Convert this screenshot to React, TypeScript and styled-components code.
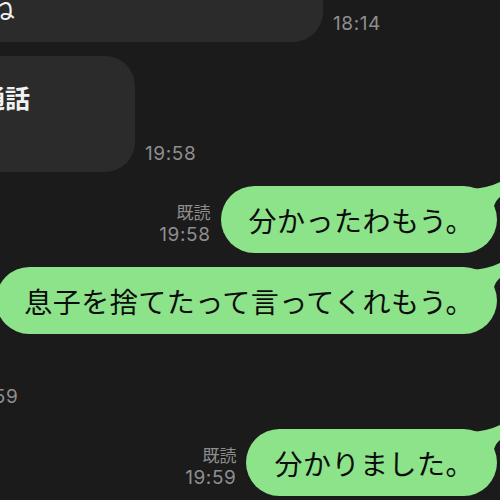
import styled, { createGlobalStyle } from "styled-components";

const GlobalStyle = createGlobalStyle`
  html, body {
    margin: 0;
    padding: 0;
    background: #1b1b1b;
  }
  body {
    width: 500px;
    height: 500px;
    overflow: hidden;
    font-family: "Noto Sans CJK JP", "Noto Sans", sans-serif;
  }
`;

const Screen = styled.div`
  width: 500px;
  height: 500px;
  overflow: hidden;
  background: #1b1b1b;
`;

// the visible area is a crop: the chat list starts left of and above the window
const ChatList = styled.div`
  width: 660px;
  margin: -58px 0 0 -160px;
  display: flex;
  flex-direction: column;
  gap: 14px;
`;

const ReceivedRow = styled.div`
  display: flex;
  align-items: flex-end;
  gap: 10px;
  padding-left: 10px;
`;

const SentRow = styled.div`
  display: flex;
  align-items: flex-end;
  justify-content: flex-end;
  gap: 10px;
  padding-right: 3px;
`;

const ReceivedBubble = styled.div<{ $width: number; $height?: number }>`
  box-sizing: border-box;
  width: ${(p) => p.$width}px;
  ${(p) => (p.$height ? `height: ${p.$height}px;` : "")}
  padding: 17px 26px;
  background: #2b2b2b;
  border-radius: 30px;
  color: #f2f2f2;
  font-size: 27px;
  line-height: 33px;
  letter-spacing: 1px;
`;

const CallBody = styled.div`
  display: flex;
  align-items: center;
  gap: 14px;
  padding-top: 8px;
`;

const CallIcon = styled.div`
  width: 40px;
  height: 40px;
  border-radius: 50%;
  background: #3a3a3a;
  flex: none;
`;

const CallTexts = styled.div`
  display: flex;
  flex-direction: column;
`;

const CallTitle = styled.span`
  font-size: 25px;
  font-weight: 700;
  line-height: 32px;
  letter-spacing: 0;
`;

const CallSub = styled.span`
  font-size: 16px;
  line-height: 24px;
  color: #9a9a9a;
`;

const SentBubble = styled.div`
  position: relative;
  box-sizing: border-box;
  height: 67px;
  display: flex;
  align-items: center;
  padding: 0 23px 0 28px;
  background: #8de38a;
  border-radius: 34px;
  color: #0c0c0c;
  font-size: 28px;
  letter-spacing: 0.5px;
  white-space: nowrap;
`;

const Ear = styled.svg`
  position: absolute;
  right: -3px;
  top: -4px;
  width: 30px;
  height: 26px;
`;

const Meta = styled.div`
  display: flex;
  flex-direction: column;
  align-items: flex-end;
  padding-bottom: 7px;
  color: #8e8e8e;
`;

const ReadMark = styled.span`
  font-size: 17px;
  line-height: 23px;
`;

const Time = styled.span`
  font-family: Inter, "Liberation Sans", sans-serif;
  font-size: 19px;
  line-height: 23px;
  letter-spacing: 0.6px;
`;

function BubbleEar() {
  return (
    <Ear viewBox="0 0 30 26">
      <path d="M0 7 Q18 6 30 0 L30 15 Q26 18 24 24 L0 24 Z" fill="#8de38a" />
    </Ear>
  );
}

function Sent({ text, time }: { text: string; time: string }) {
  return (
    <SentRow>
      <Meta>
        <ReadMark>既読</ReadMark>
        <Time>{time}</Time>
      </Meta>
      <SentBubble>
        {text}
        <BubbleEar />
      </SentBubble>
    </SentRow>
  );
}

export default function App() {
  return (
    <Screen>
      <GlobalStyle />
      <ChatList>
        <ReceivedRow>
          <ReceivedBubble $width={473}>
            もう少し話せるかな
            <br />
            いいのかね
          </ReceivedBubble>
          <Meta>
            <Time>18:14</Time>
          </Meta>
        </ReceivedRow>

        <ReceivedRow>
          <ReceivedBubble $width={285} $height={116}>
            <CallBody>
              <CallIcon />
              <CallTexts>
                <CallTitle>音声通話</CallTitle>
                <CallSub>0:42</CallSub>
              </CallTexts>
            </CallBody>
          </ReceivedBubble>
          <Meta>
            <Time>19:58</Time>
          </Meta>
        </ReceivedRow>

        <Sent text="分かったわもう。" time="19:58" />
        <Sent text="息子を捨てたって言ってくれもう。" time="19:58" />

        <ReceivedRow>
          <ReceivedBubble $width={107} $height={67}>
            え
          </ReceivedBubble>
          <Meta>
            <Time>19:59</Time>
          </Meta>
        </ReceivedRow>

        <Sent text="分かりました。" time="19:59" />
      </ChatList>
    </Screen>
  );
}
